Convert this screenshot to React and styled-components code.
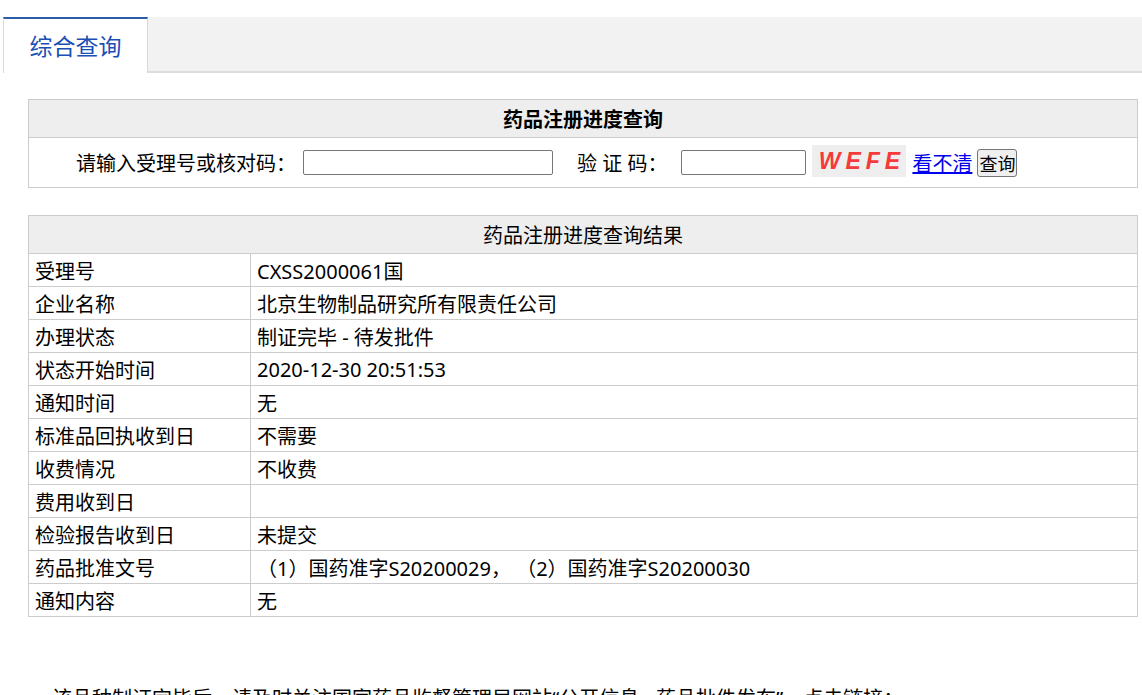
import styled, { createGlobalStyle } from "styled-components";

const GlobalStyle = createGlobalStyle`
  html, body {
    margin: 0;
    padding: 0;
    background: #ffffff;
  }
  body {
    font-family: "Noto Sans", "Noto Sans CJK SC", sans-serif;
    color: #000;
    overflow: hidden;
  }
`;

const Page = styled.div`
  padding-top: 17px;
  height: 695px;
  box-sizing: border-box;
  overflow: hidden;
`;

const TabBar = styled.div`
  display: flex;
  margin-left: 3px;
  height: 56px;
  background: #f2f2f2;
  border-bottom: 2px solid #dcdcdc;
  box-sizing: border-box;
`;

const Tab = styled.div`
  width: 145px;
  height: 56px;
  box-sizing: border-box;
  background: #fff;
  border-top: 2px solid #2a5caa;
  border-left: 1px solid #d8d8d8;
  border-right: 1px solid #d8d8d8;
  color: #1a4fb4;
  font-size: 23px;
  line-height: 54px;
  text-align: center;
  margin-bottom: -2px;
`;

const Content = styled.div`
  padding: 26px 4px 0 28px;
`;

const Box = styled.div`
  width: 1110px;
  border: 1px solid #cccccc;
  box-sizing: border-box;
  margin-bottom: ${(p) => p.$gap || 0}px;
`;

const BoxHead = styled.div`
  height: 37px;
  background: #eeeeee;
  border-bottom: 1px solid #cccccc;
  display: flex;
  align-items: center;
  justify-content: center;
  font-size: 20px;
  font-weight: ${(p) => (p.$bold ? 700 : 400)};
`;

const QueryRow = styled.div`
  height: 49px;
  display: flex;
  align-items: center;
  padding-left: 47px;
  font-size: 20px;
`;

const Label = styled.span`
  margin-right: ${(p) => p.$mr || 0}px;
  white-space: pre;
`;

const Input = styled.input`
  width: ${(p) => p.$w}px;
  height: 25px;
  box-sizing: border-box;
  border: 1px solid #767676;
  border-radius: 2px;
  padding: 0 4px;
  margin-right: ${(p) => p.$mr || 0}px;
  font-size: 14px;
`;

const Captcha = styled.span`
  width: 94px;
  height: 32px;
  background: #eeeeee;
  color: #f43a3a;
  font-family: "Liberation Sans", Arial, sans-serif;
  font-style: italic;
  font-weight: 700;
  font-size: 23px;
  letter-spacing: 5px;
  padding-left: 5px;
  box-sizing: border-box;
  display: flex;
  align-items: center;
  justify-content: center;
  margin-right: 6px;
  margin-top: -3px;
`;

const Link = styled.a`
  color: #0000ee;
  text-decoration: underline;
  font-size: 20px;
  margin-right: 5px;
  cursor: pointer;
`;

const Button = styled.button`
  height: 28px;
  width: 40px;
  padding: 0;
  font-family: "Noto Sans CJK SC", sans-serif;
  font-size: 18px;
  line-height: 26px;
  border: 1px solid #767676;
  border-radius: 3px;
  background: #efefef;
  color: #000;
`;

const Row = styled.div`
  display: grid;
  grid-template-columns: 221px 1fr;
  height: 32px;
  border-bottom: 1px solid #cccccc;
  font-size: 20px;
  &:last-child {
    border-bottom: none;
  }
`;

const Cell = styled.div`
  display: flex;
  align-items: center;
  padding-left: 6px;
  border-left: ${(p) => (p.$value ? "1px solid #cccccc" : "none")};
  white-space: pre;
`;

const Notice = styled.p`
  margin: 0;
  padding: 69px 0 0 24px;
  font-size: 20px;
  line-height: 26px;
  white-space: nowrap;
`;

const rows = [
  ["受理号", "CXSS2000061国"],
  ["企业名称", "北京生物制品研究所有限责任公司"],
  ["办理状态", "制证完毕 - 待发批件"],
  ["状态开始时间", "2020-12-30 20:51:53"],
  ["通知时间", "无"],
  ["标准品回执收到日", "不需要"],
  ["收费情况", "不收费"],
  ["费用收到日", ""],
  ["检验报告收到日", "未提交"],
  ["药品批准文号", "（1）国药准字S20200029， （2）国药准字S20200030"],
  ["通知内容", "无"],
];

const App = () => {
  return (
    <Page>
      <GlobalStyle />
      <TabBar>
        <Tab>综合查询</Tab>
      </TabBar>
      <Content>
        <Box $gap={27}>
          <BoxHead $bold>药品注册进度查询</BoxHead>
          <QueryRow>
            <Label $mr={7}>请输入受理号或核对码：</Label>
            <Input $w={250} $mr={24} />
            <Label $mr={14}>验 证 码：</Label>
            <Input $w={125} $mr={6} />
            <Captcha>WEFE</Captcha>
            <Link>看不清</Link>
            <Button>查询</Button>
          </QueryRow>
        </Box>
        <Box>
          <BoxHead>药品注册进度查询结果</BoxHead>
          {rows.map(([k, v]) => (
            <Row key={k}>
              <Cell>{k}</Cell>
              <Cell $value>{v}</Cell>
            </Row>
          ))}
        </Box>
        <Notice>
          该品种制证完毕后，请及时关注国家药品监督管理局网站“公开信息 - 药品批件发布”，点击链接：
        </Notice>
      </Content>
    </Page>
  );
};

export default App;
